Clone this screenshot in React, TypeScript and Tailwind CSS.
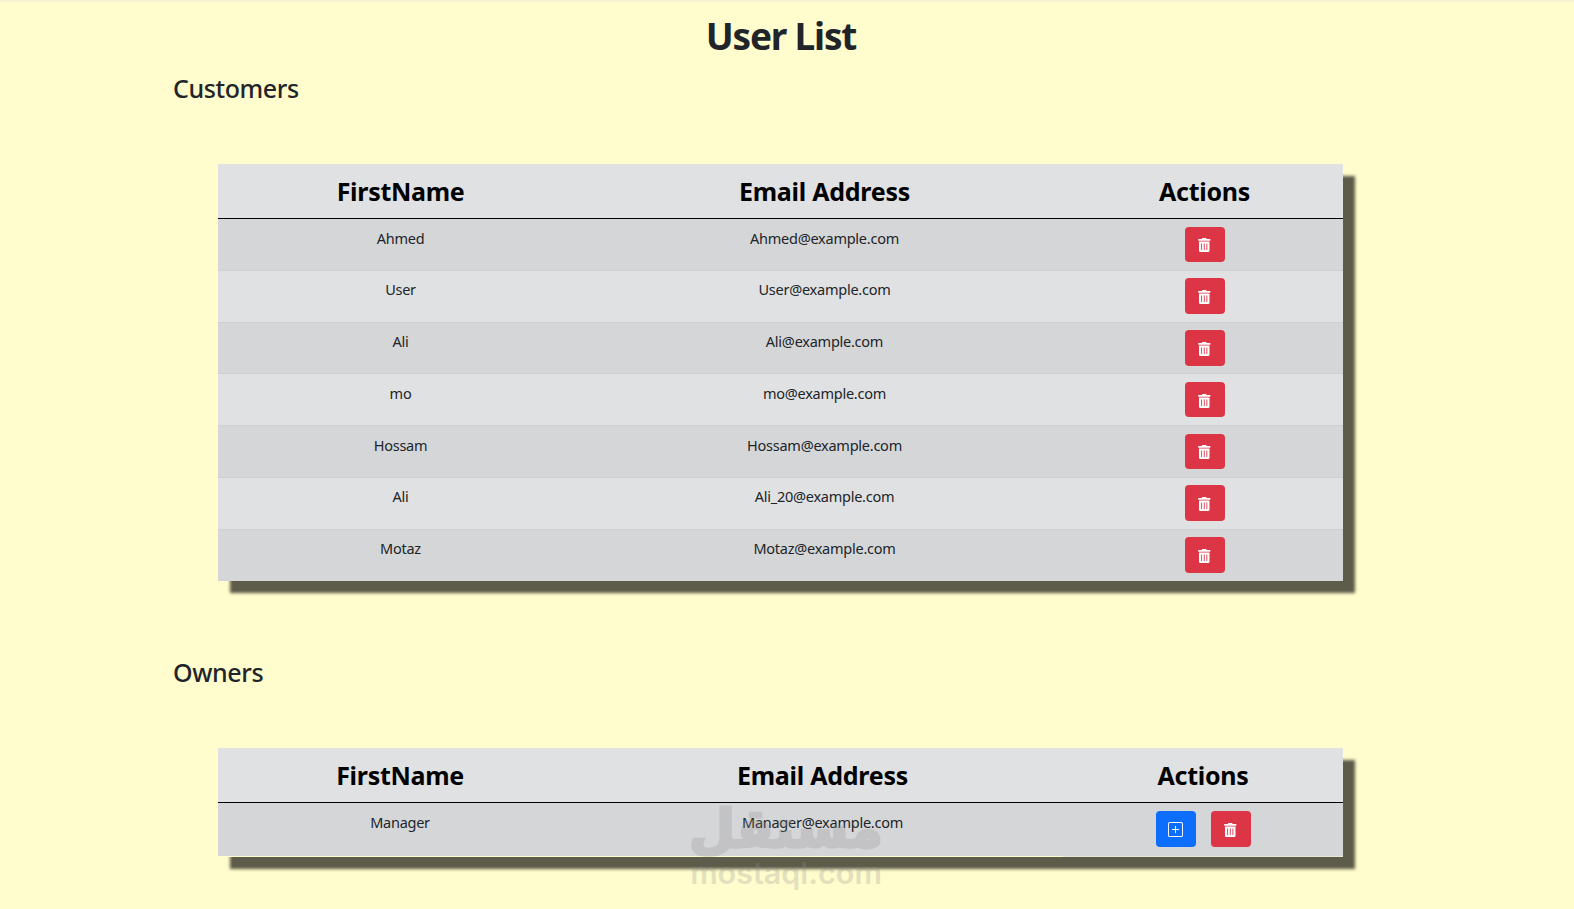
import React from "react";
import { FaTrashAlt } from "react-icons/fa";
import { BsPlusSquare } from "react-icons/bs";

const customers = [
  { name: "Ahmed", email: "Ahmed@example.com" },
  { name: "User", email: "User@example.com" },
  { name: "Ali", email: "Ali@example.com" },
  { name: "mo", email: "mo@example.com" },
  { name: "Hossam", email: "Hossam@example.com" },
  { name: "Ali", email: "Ali_20@example.com" },
  { name: "Motaz", email: "Motaz@example.com" },
];

const DeleteButton = () => (
  <button className="inline-flex h-[35.5px] w-[40px] items-center justify-center rounded-[4px] bg-[#dc3545] pt-[2px] text-white">
    <FaTrashAlt className="h-[14px] w-[12.5px]" />
  </button>
);

const AddButton = () => (
  <button className="inline-flex h-[36px] w-[40px] items-center justify-center rounded-[4px] bg-[#0d6efd] text-white">
    <BsPlusSquare className="h-[15px] w-[15px]" />
  </button>
);

const HeaderRow = () => (
  <tr className="h-[54.5px] border-b-[1.5px] border-black bg-[#e0e1e3]">
    <th className="text-center align-middle text-[25px] leading-[30px] font-bold tracking-[-0.3px] text-black">FirstName</th>
    <th className="text-center align-middle text-[25px] leading-[30px] font-bold tracking-[-0.25px] text-black">Email Address</th>
    <th className="text-center align-middle text-[25px] leading-[30px] font-bold tracking-[-0.3px] text-black">Actions</th>
  </tr>
);

export default function App() {
  return (
    <div className="relative h-[909px] overflow-hidden bg-[#fffccd] font-['Noto_Sans',sans-serif] text-[#212529]">
      <div className="h-[3px] bg-gradient-to-b from-[#f1efd6] to-[#fffccd]" />

      <div className="ml-[173px] w-[1216px]">
        <h1 className="mt-[9px] h-[48px] text-center text-[37px] leading-[48px] font-bold tracking-[-1.2px]">User List</h1>

        <h2 className="mt-[10px] h-[36px] text-[25px] leading-[36px] font-medium tracking-[-0.4px]">Customers</h2>
        <table className="mt-[58px] ml-[45px] w-[1125px] table-fixed border-collapse shadow-[12px_12px_3px_#5d5b49]">
          <colgroup>
            <col className="w-[365px]" />
            <col className="w-[483px]" />
            <col className="w-[277px]" />
          </colgroup>
          <thead>
            <HeaderRow />
          </thead>
          <tbody className="text-[14.5px] leading-[22px] tracking-[-0.25px]">
            {customers.map((c, i) => (
              <tr key={i} className={`h-[51.8px] border-b border-[#cfd0d2] last:border-b-0 ${i % 2 === 0 ? "bg-[#d5d6d8]" : "bg-[#e0e1e3]"}`}>
                <td className="pt-[7.5px] text-center align-top">{c.name}</td>
                <td className="pt-[7.5px] text-center align-top">{c.email}</td>
                <td className="pt-[7.5px] text-center align-top">
                  <DeleteButton />
                </td>
              </tr>
            ))}
          </tbody>
        </table>

        <h2 className="mt-[72.5px] h-[36px] text-[25px] leading-[36px] font-medium tracking-[-0.4px]">Owners</h2>
        <table className="mt-[58.5px] ml-[45px] w-[1125px] table-fixed border-collapse shadow-[12px_12px_3px_#5d5b49]">
          <colgroup>
            <col className="w-[364px]" />
            <col className="w-[481px]" />
            <col className="w-[280px]" />
          </colgroup>
          <thead>
            <HeaderRow />
          </thead>
          <tbody className="text-[14.5px] leading-[22px] tracking-[-0.25px]">
            <tr className="h-[53.5px] bg-[#d5d6d8]">
              <td className="pt-[7.5px] text-center align-top">Manager</td>
              <td className="pt-[7.5px] text-center align-top">Manager@example.com</td>
              <td className="border-b border-[#e8e8d8] pt-[8px] text-center align-top">
                <div className="flex justify-center gap-[15px]">
                  <AddButton />
                  <DeleteButton />
                </div>
              </td>
            </tr>
          </tbody>
        </table>
      </div>

      <div className="pointer-events-none absolute top-[801px] left-[691px] flex w-[190px] flex-col items-center text-[#8f8f8f] opacity-25">
        <span dir="rtl" className="font-['DejaVu_Sans',sans-serif] text-[53px] leading-[56px] font-bold [-webkit-text-stroke:3px_#8f8f8f]">مستقل</span>
        <span className="font-['Inter',sans-serif] text-[30.5px] leading-[32px] font-semibold">mostaql.com</span>
      </div>
    </div>
  );
}
